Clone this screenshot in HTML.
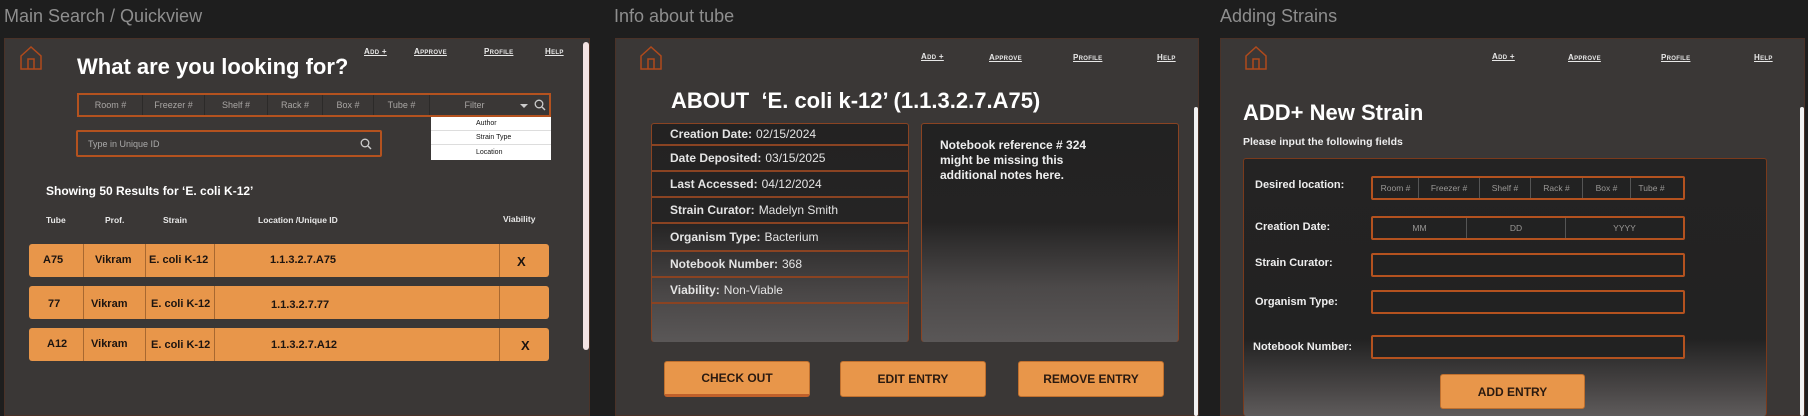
<!DOCTYPE html>
<html><head><meta charset="utf-8"><style>
*{margin:0;padding:0;box-sizing:border-box}
body{width:1808px;height:416px;background:#1e1e1e;position:relative;overflow:hidden;font-family:"Liberation Sans",sans-serif}
.a{position:absolute}
.cap{color:#8e8e8e;font-size:18px;top:6px}
.frame{background:#3a3736;top:38px;height:378px;border:1px solid #4a3228}
.nav{font-size:8px;font-weight:bold;color:#e8e8e8;text-decoration:underline;font-variant:small-caps;letter-spacing:.3px}
.o{border:2px solid #b4521f}
.cell{position:absolute;top:0;height:100%;border-left:1px solid #2c2a29;font-size:9px;color:#a9a6a4;display:flex;align-items:center;justify-content:center}
.row{background:#e8964a;border-radius:3px;height:33px;left:29px;width:520px}
.row span{position:absolute;font-size:11px;font-weight:bold;color:#1c1410;top:10px}
.row i{position:absolute;top:0;height:100%;border-left:1px solid #a86830}
.hd{font-size:8.5px;font-weight:bold;color:#e8e8e8;top:215px}
.info{font-size:12px;color:#e4e4e4;left:0;width:100%;height:26px;border-bottom:2px solid #8a4322;padding-left:18px;display:flex;align-items:center}
.info b{margin-right:4px}
.btn{background:#e8964a;border:1px solid #c0702e;border-radius:3px;height:36px;width:146px;top:361px;font-size:12px;font-weight:bold;color:#2a1a10;display:flex;align-items:center;justify-content:center}
.lab{font-size:11px;font-weight:bold;color:#eee;left:1255px}
.fld{left:1371px;width:314px;height:24px;border:2px solid #b4521f;border-radius:2px;background:#222}
.fc{position:absolute;top:0;height:100%;border-left:1px solid #555;font-size:8.5px;color:#9a9896;display:flex;align-items:center;justify-content:center}
</style></head><body>
<!-- Panel 1 -->
<div class="a cap" style="left:4px">Main Search / Quickview</div>
<div class="a frame" style="left:4px;width:586px"></div>
<svg class="a" style="left:19px;top:45px" width="24" height="26" viewBox="0 0 24 26"><path d="M2 11 L12 2 L22 11 V24 H2 Z M9 24 V14 H15 V24" fill="none" stroke="#b04a1c" stroke-width="1.5"/></svg>
<div class="a" style="left:77px;top:54px;font-size:22px;font-weight:bold;color:#fff">What are you looking for?</div>
<div class="a nav" style="left:364px;top:47px">Add +</div>
<div class="a nav" style="left:414px;top:47px">Approve</div>
<div class="a nav" style="left:484px;top:47px">Profile</div>
<div class="a nav" style="left:545px;top:47px">Help</div>
<div class="a o" style="left:77px;top:93px;width:474px;height:24px;background:#3a3736">
 <div class="cell" style="left:0;width:63px;border:none">Room #</div>
 <div class="cell" style="left:63px;width:62px">Freezer #</div>
 <div class="cell" style="left:125px;width:63px">Shelf #</div>
 <div class="cell" style="left:188px;width:55px">Rack #</div>
 <div class="cell" style="left:243px;width:51px">Box #</div>
 <div class="cell" style="left:294px;width:56px">Tube #</div>
 <div class="cell" style="left:350px;width:90px">Filter</div>
 <div class="a" style="left:441px;top:9px;border:4px solid transparent;border-top:4px solid #ccc"></div>
 <svg class="a" style="left:455px;top:4px" width="12" height="12"><circle cx="5" cy="5" r="3.8" fill="none" stroke="#ccc" stroke-width="1.3"/><path d="M8 8 L11 11" stroke="#ccc" stroke-width="1.4"/></svg>
</div>
<div class="a" style="left:431px;top:117px;width:120px;height:43px;background:#fff;font-size:7px;color:#111">
 <div style="height:14px;border-bottom:1px solid #ddd;padding-left:45px;line-height:14px">Author</div>
 <div style="height:14px;border-bottom:1px solid #ddd;padding-left:45px;line-height:14px">Strain Type</div>
 <div style="height:14px;padding-left:45px;line-height:15px">Location</div>
</div>
<div class="a o" style="left:76px;top:130px;width:306px;height:27px;border-radius:2px;font-size:9px;color:#aaa;padding:7px 10px">Type in Unique ID
 <svg class="a" style="left:282px;top:6px" width="12" height="12"><circle cx="5" cy="5" r="3.8" fill="none" stroke="#ccc" stroke-width="1.3"/><path d="M8 8 L11 11" stroke="#ccc" stroke-width="1.4"/></svg></div>
<div class="a" style="left:46px;top:184px;font-size:12px;font-weight:bold;color:#fff">Showing 50 Results for ‘E. coli K-12’</div>
<div class="a hd" style="left:46px">Tube</div><div class="a hd" style="left:105px">Prof.</div><div class="a hd" style="left:163px">Strain</div><div class="a hd" style="left:258px">Location /Unique ID</div><div class="a hd" style="left:503px;top:214px">Viability</div>
<div class="a row" style="top:244px"><i style="left:54px"></i><i style="left:116px"></i><i style="left:185px"></i><i style="left:470px"></i><span style="left:14px">A75</span><span style="left:66px">Vikram</span><span style="left:120px">E. coli K-12</span><span style="left:241px">1.1.3.2.7.A75</span><span style="left:488px;font-size:13px">X</span></div>
<div class="a row" style="top:286px"><i style="left:54px"></i><i style="left:116px"></i><i style="left:185px"></i><i style="left:470px"></i><span style="left:19px;top:12px">77</span><span style="left:62px;top:12px">Vikram</span><span style="left:122px;top:12px">E. coli K-12</span><span style="left:242px;top:13px">1.1.3.2.7.77</span></div>
<div class="a row" style="top:328px"><i style="left:54px"></i><i style="left:116px"></i><i style="left:185px"></i><i style="left:470px"></i><span style="left:18px">A12</span><span style="left:62px">Vikram</span><span style="left:122px;top:11px">E. coli K-12</span><span style="left:242px;top:11px">1.1.3.2.7.A12</span><span style="left:492px;font-size:13px">X</span></div>
<div class="a" style="left:583px;top:42px;width:6px;height:308px;background:#f4e4e4;border-radius:3px"></div>

<!-- Panel 2 -->
<div class="a cap" style="left:614px">Info about tube</div>
<div class="a frame" style="left:615px;width:584px"></div>
<svg class="a" style="left:639px;top:45px" width="24" height="26" viewBox="0 0 24 26"><path d="M2 11 L12 2 L22 11 V24 H2 Z M9 24 V14 H15 V24" fill="none" stroke="#b04a1c" stroke-width="1.5"/></svg>
<div class="a nav" style="left:921px;top:52px">Add +</div>
<div class="a nav" style="left:989px;top:53px">Approve</div>
<div class="a nav" style="left:1073px;top:53px">Profile</div>
<div class="a nav" style="left:1157px;top:53px">Help</div>
<div class="a" style="left:671px;top:88px;font-size:22px;font-weight:bold;color:#fff">ABOUT &nbsp;‘E. coli k-12’ (1.1.3.2.7.A75)</div>
<div class="a" style="left:651px;top:123px;width:258px;height:219px;border:1px solid #8a4322;border-bottom:none;border-radius:3px;background:linear-gradient(#232222 0%,#252424 45%,#4a4747 78%,#5a5757 100%);overflow:hidden">
 <div class="info" style="height:22px"><b>Creation Date:</b>02/15/2024</div>
 <div class="info"><b>Date Deposited:</b>03/15/2025</div>
 <div class="info"><b>Last Accessed:</b>04/12/2024</div>
 <div class="info"><b>Strain Curator:</b>Madelyn Smith</div>
 <div class="info" style="height:28px"><b>Organism Type:</b>Bacterium</div>
 <div class="info"><b>Notebook Number:</b>368</div>
 <div class="info"><b>Viability:</b>Non-Viable</div>
</div>
<div class="a" style="left:921px;top:123px;width:258px;height:219px;border:1px solid #8a4322;border-bottom:none;border-radius:3px;background:linear-gradient(#222 0%,#242323 45%,#4c4949 75%,#5a5757 100%);padding:14px 18px;font-size:12px;font-weight:bold;color:#eee;line-height:15px">Notebook reference # 324<br>might be missing this<br>additional notes here.</div>
<div class="a btn" style="left:664px;border-bottom:3px solid #c0602a">CHECK OUT</div>
<div class="a btn" style="left:840px">EDIT ENTRY</div>
<div class="a btn" style="left:1018px">REMOVE ENTRY</div>
<div class="a" style="left:1194px;top:107px;width:4px;height:309px;background:#f2f2f2;border-radius:2px"></div>

<!-- Panel 3 -->
<div class="a cap" style="left:1220px">Adding Strains</div>
<div class="a frame" style="left:1220px;width:585px"></div>
<svg class="a" style="left:1244px;top:45px" width="24" height="26" viewBox="0 0 24 26"><path d="M2 11 L12 2 L22 11 V24 H2 Z M9 24 V14 H15 V24" fill="none" stroke="#b04a1c" stroke-width="1.5"/></svg>
<div class="a nav" style="left:1492px;top:52px">Add +</div>
<div class="a nav" style="left:1568px;top:53px">Approve</div>
<div class="a nav" style="left:1661px;top:53px">Profile</div>
<div class="a nav" style="left:1754px;top:53px">Help</div>
<div class="a" style="left:1243px;top:100px;font-size:22px;font-weight:bold;color:#fff">ADD+ New Strain</div>
<div class="a" style="left:1243px;top:136px;font-size:10.5px;font-weight:bold;color:#eee">Please input the following fields</div>
<div class="a" style="left:1243px;top:158px;width:524px;height:258px;border:1px solid #7a3a1c;border-bottom:none;border-radius:3px;background:linear-gradient(#242323 0%,#222 70%,#4a4747 90%,#5e5b5b 100%)"></div>
<div class="a lab" style="top:179px">Desired location:</div>
<div class="a lab" style="top:221px">Creation Date:</div>
<div class="a lab" style="top:257px">Strain Curator:</div>
<div class="a lab" style="top:296px">Organism Type:</div>
<div class="a lab" style="top:341px;left:1253px">Notebook Number:</div>
<div class="a fld" style="top:176px">
 <div class="fc" style="left:0;width:45px;border:none">Room #</div>
 <div class="fc" style="left:45px;width:61px">Freezer #</div>
 <div class="fc" style="left:106px;width:51px">Shelf #</div>
 <div class="fc" style="left:157px;width:52px">Rack #</div>
 <div class="fc" style="left:209px;width:48px">Box #</div>
 <div class="fc" style="left:257px;width:42px">Tube #</div>
</div>
<div class="a fld" style="top:216px">
 <div class="fc" style="left:0;width:93px;border:none">MM</div>
 <div class="fc" style="left:93px;width:99px">DD</div>
 <div class="fc" style="left:192px;width:118px">YYYY</div>
</div>
<div class="a fld" style="top:253px"></div>
<div class="a fld" style="top:290px"></div>
<div class="a fld" style="top:335px"></div>
<div class="a btn" style="left:1440px;top:374px;width:145px;height:35px">ADD ENTRY</div>
<div class="a" style="left:1800px;top:107px;width:4px;height:309px;background:#f2f2f2;border-radius:2px"></div>
</body></html>
